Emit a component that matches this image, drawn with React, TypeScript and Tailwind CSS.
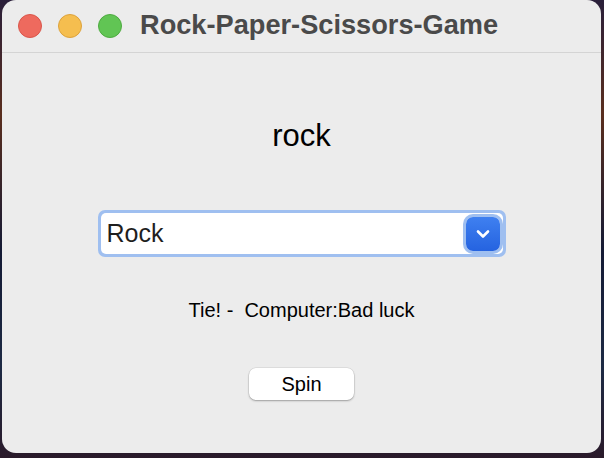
export default function App() {
  return (
    <div className="w-[604px] h-[458px] bg-[linear-gradient(180deg,#2a1f3a_0%,#5a2e1e_25%,#141a35_55%,#1d2a44_80%,#2a1a2a_100%)] pl-[2px] pr-[3px] pb-[5px] font-['Liberation_Sans',Arial,sans-serif]">
      <div className="h-full bg-[#ececec] rounded-[14px] flex flex-col overflow-hidden">
        <div className="h-[53px] shrink-0 flex items-center border-b border-[#d4d4d4] pl-[16px]">
          <div className="flex gap-[16px]">
            <span className="w-[24px] h-[24px] rounded-full bg-[#ee6a5e] border border-[#d9564b]" />
            <span className="w-[24px] h-[24px] rounded-full bg-[#f5be4f] border border-[#dca23c]" />
            <span className="w-[24px] h-[24px] rounded-full bg-[#61c554] border border-[#4eaa40]" />
          </div>
          <span className="ml-[18px] mb-[2px] text-[27.2px] font-bold text-[#4a4a4a] leading-none">Rock-Paper-Scissors-Game</span>
        </div>
        <div className="flex-1 flex flex-col items-center">
          <div className="mt-[67px] text-[31px] text-black leading-none">rock</div>
          <div className="mt-[59px] w-[408px] h-[47px] rounded-[7px] bg-[#9fbff0] p-[3px]">
            <div className="h-full bg-white rounded-[5px] flex items-center justify-between pl-[6px] pr-[3px]">
              <span className="text-[25px] text-[#1e1e1e] leading-none">Rock</span>
              <span className="w-[34px] h-[34px] rounded-[7px] bg-[linear-gradient(180deg,#3f80f0,#2563e0)] ring-[3px] ring-[#9fbff0] flex items-center justify-center">
                <svg width="16" height="12" viewBox="0 0 16 12" fill="none">
                  <path d="M3 3.5l5 5 5-5" stroke="white" strokeWidth="2.6" strokeLinecap="round" strokeLinejoin="round" />
                </svg>
              </span>
            </div>
          </div>
          <div className="mt-[43px] text-[20px] text-black leading-none whitespace-pre">Tie! -  Computer:Bad luck</div>
          <button className="mt-[48px] w-[105px] h-[32px] bg-white rounded-[7px] shadow-[0_1px_2px_rgba(0,0,0,0.3),0_0_0_0.5px_rgba(0,0,0,0.1)] text-[20px] text-black leading-none">Spin</button>
        </div>
      </div>
    </div>
  );
}
